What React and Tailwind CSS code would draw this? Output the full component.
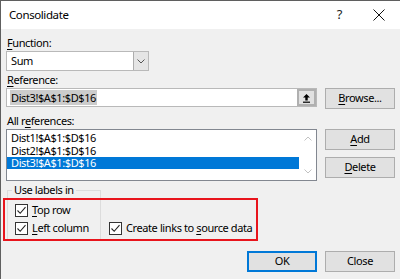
import React from "react";

const font = { fontFamily: '"Noto Sans", "Liberation Sans", sans-serif' };

function U({ children }) {
  return <span className="underline underline-offset-2">{children}</span>;
}

function Check({ children }) {
  return (
    <div className="flex items-center gap-[4px] h-[18px]">
      <div className="w-[13px] h-[13px] border border-[#333] bg-white flex items-center justify-center">
        <svg width="11" height="11" viewBox="0 0 11 11">
          <path d="M1.5 5.5 L4.2 8.3 L9.5 2.2" fill="none" stroke="#222" strokeWidth="1.1" />
        </svg>
      </div>
      <span className="leading-[16px]">{children}</span>
    </div>
  );
}

function Btn({ children, primary }) {
  return (
    <div
      className={
        "w-[70px] h-[21px] flex items-center justify-center bg-[#e1e1e1] " +
        (primary ? "border-2 border-[#0078d7]" : "border border-[#adadad]")
      }
    >
      {children}
    </div>
  );
}

export default function App() {
  return (
    <div
      className="w-[400px] h-[279px] overflow-hidden border-l border-t border-[#5f5f5f] text-[11px] tracking-[-0.4px] text-black bg-[#f0f0f0]"
      style={font}
    >
      <div className="h-[28px] bg-white flex items-center pl-[8px] pr-[15px]">
        <span className="flex-1 text-[11.5px]">Consolidate</span>
        <span className="mr-[31px] text-[13px] text-[#222]">?</span>
        <svg width="12" height="12" viewBox="0 0 12 12">
          <path d="M0.5 0.5 L11.5 11.5 M11.5 0.5 L0.5 11.5" stroke="#111" strokeWidth="1" />
        </svg>
      </div>

      <div className="relative pl-[5px] pr-[5px] pt-[6px]">
        <div className="leading-[16px] ml-[1px]">
          <U>F</U>unction:
        </div>
        <div className="w-[143px] h-[20px] border border-[#b9b9b9] bg-white flex items-stretch">
          <span className="flex-1 pl-[4px] leading-[18px]">Sum</span>
          <div className="w-[15px] bg-[#e5e5e5] border-l border-[#adadad] flex items-center justify-center">
            <svg width="8" height="5" viewBox="0 0 8 5">
              <path d="M0.5 0.5 L4 4 L7.5 0.5" fill="none" stroke="#555" strokeWidth="1" />
            </svg>
          </div>
        </div>

        <div className="leading-[16px] ml-[1px] mt-[1px]">
          <U>R</U>eference:
        </div>
        <div className="flex gap-[8px]">
          <div className="w-[311px] h-[19px] border border-[#b9b9b9] bg-white flex items-stretch">
            <div className="flex-1 pl-[3px] flex items-center">
              <span className="bg-[#cccccc] leading-[15px] px-[1px]">Dist3!$A$1:$D$16</span>
            </div>
            <div className="w-[19px] bg-[#e1e1e1] border-2 border-[#b0b0b0] flex items-center justify-center">
              <svg width="9" height="10" viewBox="0 0 9 10">
                <path d="M4.5 1 L1 4.5 H3.3 V7.5 H5.7 V4.5 H8 Z" fill="#000" />
                <rect x="1" y="8.6" width="7" height="1.2" fill="#000" />
              </svg>
            </div>
          </div>
          <Btn>
            <U>B</U>rowse...
          </Btn>
        </div>

        <div className="leading-[16px] ml-[1px] mt-[4px]">
          All r<U>e</U>ferences:
        </div>
        <div className="flex gap-[8px] items-start">
          <div className="w-[311px] h-[52px] border border-[#828790] bg-white flex">
            <div className="flex-1 pt-[1px]">
              <div className="h-[13px] leading-[12px] pl-[4px] pt-[1px]">Dist1!$A$1:$D$16</div>
              <div className="h-[13px] leading-[12px] pl-[4px] pt-[1px]">Dist2!$A$1:$D$16</div>
              <div className="h-[12px] leading-[12px] pl-[4px] bg-[#0078d7] text-white">Dist3!$A$1:$D$16</div>
            </div>
            <div className="w-[17px] flex flex-col items-center justify-between py-[6px]">
              <svg width="8" height="5" viewBox="0 0 8 5">
                <path d="M0.5 4.5 L4 1 L7.5 4.5" fill="none" stroke="#c2c2c2" strokeWidth="1" />
              </svg>
              <svg width="8" height="5" viewBox="0 0 8 5">
                <path d="M0.5 0.5 L4 4 L7.5 0.5" fill="none" stroke="#c2c2c2" strokeWidth="1" />
              </svg>
            </div>
          </div>
          <div className="flex flex-col gap-[7px]">
            <Btn>
              <U>A</U>dd
            </Btn>
            <Btn>
              <U>D</U>elete
            </Btn>
          </div>
        </div>

        <div className="flex items-end mt-[9px]">
          <div className="relative w-[94px] h-[51px] ml-[1px] border border-[#dcdcdc] pt-[10px] pl-[7px]">
            <span className="absolute -top-[9px] left-[4px] px-[2px] bg-[#f0f0f0] leading-[16px]">
              Use labels in
            </span>
            <Check>
              <U>T</U>op row
            </Check>
            <Check>
              <U>L</U>eft column
            </Check>
          </div>
          <div className="ml-[8px] mb-[4px]">
            <Check>
              Create links to <U>s</U>ource data
            </Check>
          </div>
        </div>

        <div className="absolute left-[2px] top-[169px] w-[255px] h-[43px] border-2 border-[#e8141c]" />

        <div className="flex justify-end gap-[8px] mt-[10px] pr-[0px]">
          <Btn primary>OK</Btn>
          <Btn>Close</Btn>
        </div>
      </div>
    </div>
  );
}
